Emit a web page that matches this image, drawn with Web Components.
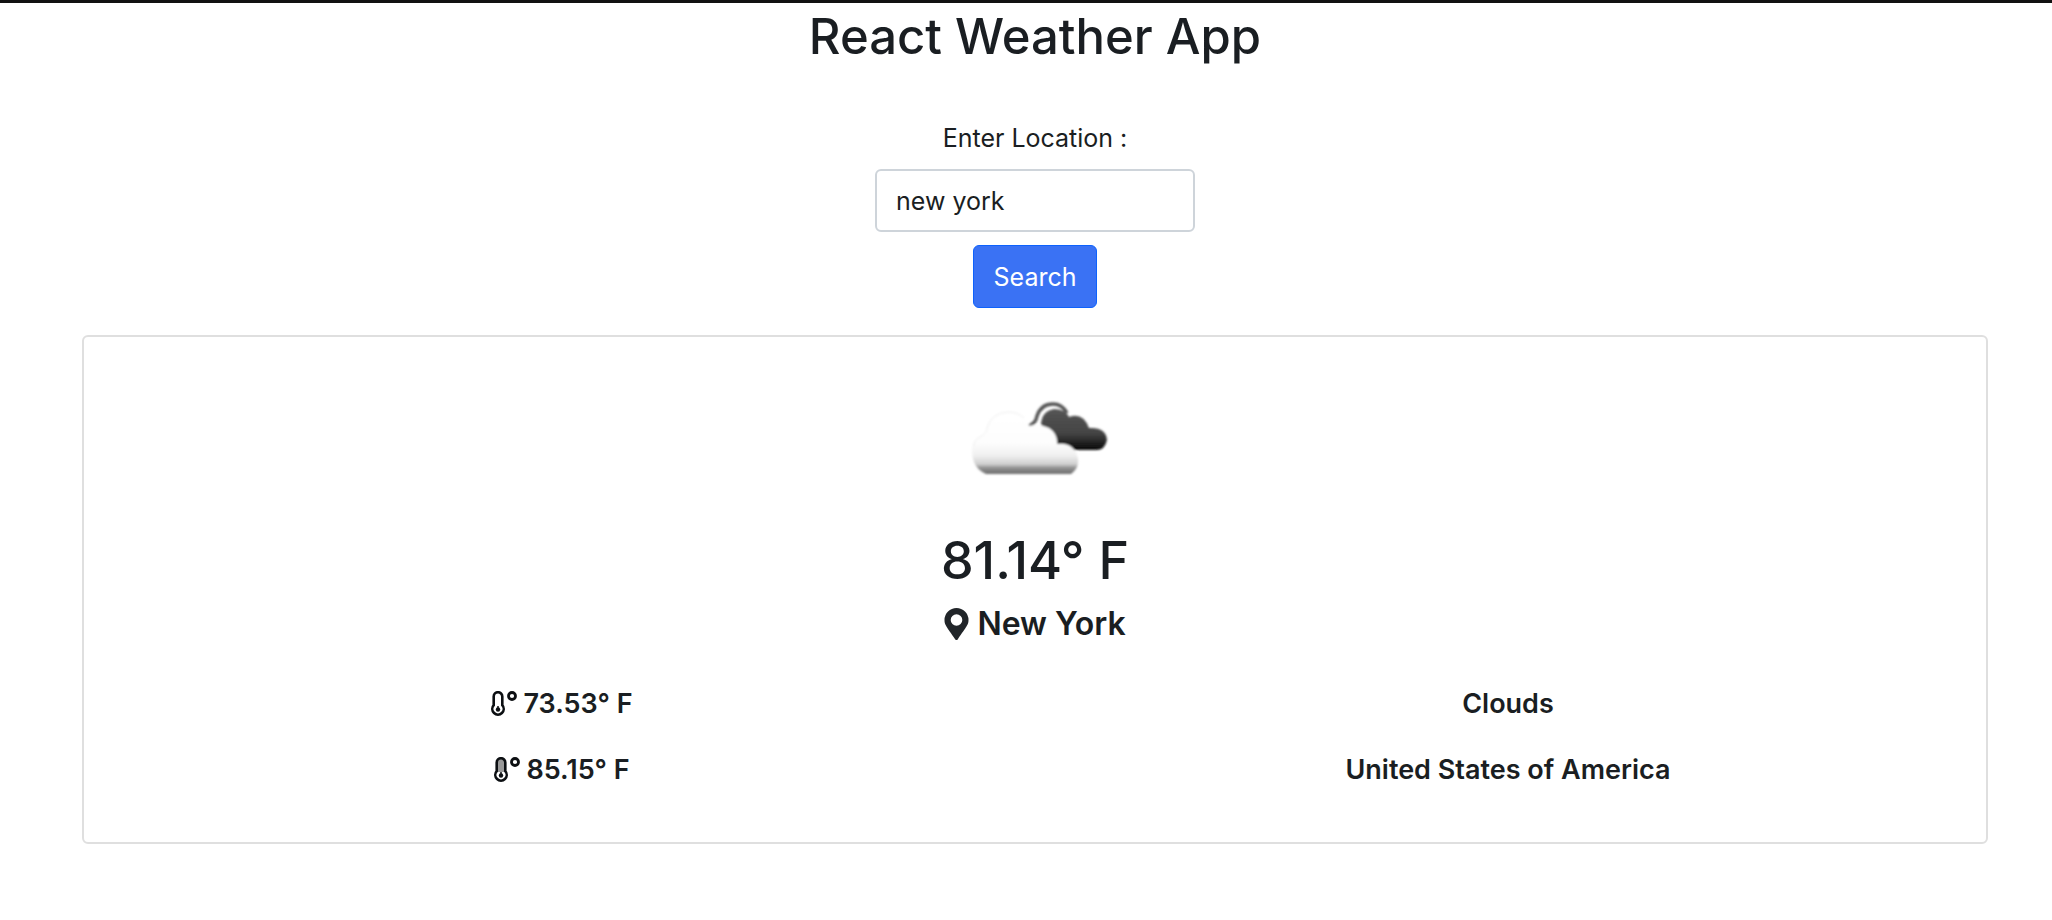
<!DOCTYPE html>
<html lang="en">
<head>
<meta charset="utf-8">
<title>React Weather App</title>
<style>
  body {
    margin: 0;
    background: #fff;
    color: #1a1e22;
    font: 400 25px/40px Inter, "Noto Sans", sans-serif;
  }
</style>
</head>
<body>
<weather-app></weather-app>

<template id="weather-app">
  <style>
    :host { display: block; border-top: 3px solid #111; padding: 4px 64px 24px 82px; }
    h1 { margin: 0 0 51px; font-size: 49px; font-weight: 500; line-height: 60px; text-align: center; }
    weather-card { margin-top: 27px; }
  </style>
  <h1>React Weather App</h1>
  <location-search value="new york">Enter Location :</location-search>
  <weather-card>
    <span slot="temperature">81.14° F</span>
    <span slot="city">New York</span>
    <weather-detail slot="left" icon="low">73.53° F</weather-detail>
    <weather-detail slot="left" icon="high">85.15° F</weather-detail>
    <weather-detail slot="right">Clouds</weather-detail>
    <weather-detail slot="right">United States of America</weather-detail>
  </weather-card>
</template>

<template id="location-search">
  <style>
    :host { display: block; }
    form { display: flex; flex-direction: column; align-items: center; }
    input, button { box-sizing: border-box; height: 63px; font: inherit; border-radius: 6px; }
    input { width: 320px; margin: 11px 0 13px; padding: 0 19px; color: inherit; background: #fff; border: 2px solid #ced4da; }
    button { padding: 0 20px; color: #fff; background: #3a72f4; border: 1px solid #0d62fd; }
  </style>
  <form>
    <label for="place"><slot></slot></label>
    <input id="place" type="text">
    <button type="button">Search</button>
  </form>
</template>

<template id="weather-card">
  <style>
    :host { display: block; border: 2px solid #dfdfdf; border-radius: 6px; padding: 43px 5px 52px; text-align: center; }
    .sky { display: block; margin: 0 auto 41px; }
    .temperature { font-size: 52px; font-weight: 500; line-height: 60px; }
    h2 { display: flex; justify-content: center; align-items: center; gap: 8px; margin: 13px 0 40px; font-size: 32px; font-weight: 600; line-height: 40px; }
    .details { display: grid; grid-template-columns: 1fr 1fr; }
    .column { display: flex; flex-direction: column; gap: 26px; }
  </style>
  <svg class="sky" width="180" height="110" viewBox="-5 0 180 110" aria-hidden="true">
    <defs>
      <linearGradient id="dark" x1="0" y1="0" x2="0" y2="1">
        <stop offset="0" stop-color="#555"/><stop offset=".6" stop-color="#444"/><stop offset=".82" stop-color="#222"/><stop offset="1" stop-color="#050505"/>
      </linearGradient>
      <linearGradient id="light" x1="0" y1="0" x2="0" y2="1">
        <stop offset="0" stop-color="#fff"/><stop offset=".5" stop-color="#fdfdfd"/><stop offset=".7" stop-color="#f0f0f0"/><stop offset=".84" stop-color="#d0d0d0"/><stop offset=".9" stop-color="#939393"/><stop offset="1" stop-color="#6c6c6c"/>
      </linearGradient>
      <filter id="soft" x="-10%" y="-10%" width="120%" height="120%"><feGaussianBlur stdDeviation="1.1"/></filter>
    </defs>
    <g filter="url(#soft)">
      <path d="M79 46 Q86 43 87 36 Q91 24 103 24 Q112 24 117 33" fill="none" stroke="#555" stroke-width="3.500"/>
      <path d="M91 44 Q92 31 104 29 Q115 29 119 37 Q133 32 139 48 Q156 47 157 60 Q155 70 146 70 H104 Z" fill="url(#dark)"/>
      <path d="M22 70 Q21 61 29 57 Q37 53 37 48 Q41 33 58 32 Q73 32 79 46 Q89 43 99 48 Q108 54 107 64 Q120 62 126 72 Q132 86 121 94 H36 Q22 88 22 70 Z" fill="url(#light)"/>
      <path d="M24 66 Q24 60 30 57 Q37 53 37 48 Q41 33 58 32 Q68 32 74 38" fill="none" stroke="#eee" stroke-width="1"/>
    </g>
  </svg>
  <div class="temperature"><slot name="temperature"></slot></div>
  <h2>
    <svg width="25" height="32" viewBox="0 0 24 32" aria-hidden="true"><path fill="#212529" fill-rule="evenodd" d="M10.8 31.4C1.7 18.1 0 16.7 0 12a12 12 0 1 1 24 0c0 4.7-1.7 6.1-10.8 19.4a1.5 1.5 0 0 1-2.4 0ZM12 17.800a5.800 5.800 0 1 0 0-11.600 5.800 5.800 0 0 0 0 11.600Z"/></svg>
    <slot name="city"></slot>
  </h2>
  <div class="details">
    <div class="column"><slot name="left"></slot></div>
    <div class="column"><slot name="right"></slot></div>
  </div>
</template>

<template id="weather-detail">
  <style>
    :host { display: flex; justify-content: center; align-items: center; gap: 6px; font-size: 27px; font-weight: 600; line-height: 40px; }
    svg { display: none; }
    :host([icon]) svg { display: block; }
    .fill { fill: none; }
    :host([icon="high"]) .fill { fill: #999; }
  </style>
  <svg width="26" height="26" viewBox="0 0 26 26" aria-hidden="true">
    <path class="fill" d="M3 5a4 4 0 0 1 8 0v10H3Z"/>
    <path d="M2.700 5.500a4.300 4.300 0 0 1 8.600 0v8.700a5.700 5.700 0 1 1-8.600 0Z" fill="none" stroke="#0c0f12" stroke-width="2.600"/>
    <circle cx="7" cy="18.500" r="2.200" fill="#0c0f12"/>
    <path d="M7 15v3" stroke="#0c0f12" stroke-width="1.500"/>
    <circle cx="21" cy="5" r="3.500" fill="none" stroke="#0c0f12" stroke-width="2.800"/>
  </svg>
  <slot></slot>
</template>

<script>
  class TemplateElement extends HTMLElement {
    constructor() {
      super();
      const template = document.getElementById(this.localName);
      this.attachShadow({ mode: "open" }).append(template.content.cloneNode(true));
    }
  }
  customElements.define("weather-detail", class extends TemplateElement {});
  customElements.define("weather-card", class extends TemplateElement {});
  customElements.define("location-search", class extends TemplateElement {
    connectedCallback() {
      this.shadowRoot.querySelector("input").value = this.getAttribute("value") || "";
    }
  });
  customElements.define("weather-app", class extends TemplateElement {});
</script>
</body>
</html>
